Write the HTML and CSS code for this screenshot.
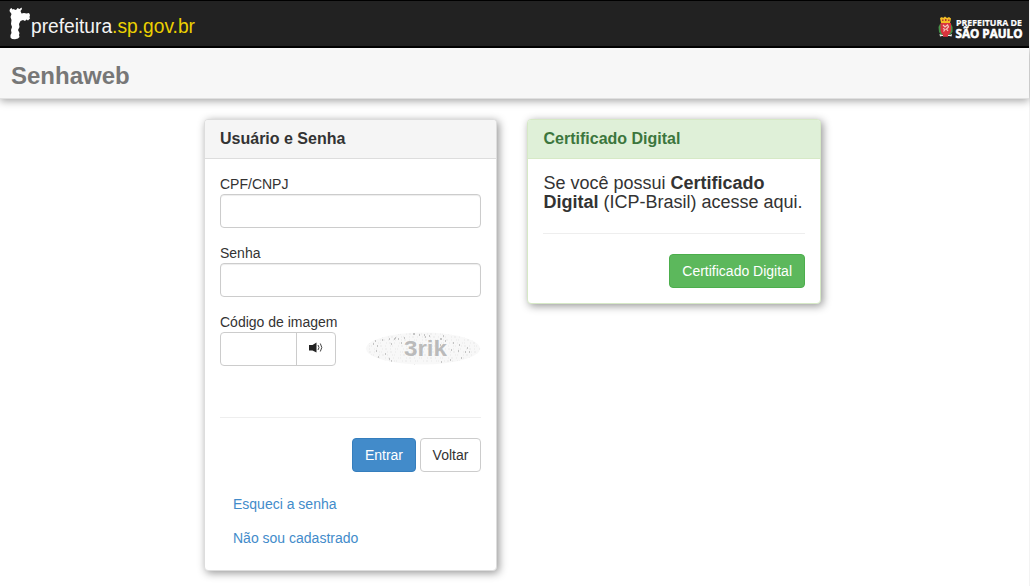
FILE: index.html
```html
<!DOCTYPE html>
<html lang="pt-BR">
<head>
<meta charset="utf-8">
<title>Senhaweb</title>
<link rel="stylesheet" href="styles.css">
</head>
<body>
<div class="page">
  <header class="topbar">
    <a class="brand">
      <svg class="brand-mark" width="22" height="34" viewBox="0 0 22 34"><path fill="#fff" d="M1 2 2.500 1 3.500 2.500 5 2 6 3 7.500 2.500 8.500 1 10.500 2 12.500 .5 13 2 11.500 4 12.500 6.500 15 6 17.500 6.500 20 6 21 8 20.500 10 21 11.500 19 13.500 17.500 12.500 16 14 14 13 11.500 14 10 17 10.500 20 9 23 10.500 26 10 28 10.500 30 9 31.500 6 32.300 3 32 1.500 30.500 1.500 28 2.500 26 2 23 3 20 2 17 2.500 13 1.500 10 2.500 7 .5 4Z"/></svg>
      <svg class="brand-name" width="170" height="28" viewBox="0 0 170 28"><text x="0" y="20" textLength="164" lengthAdjust="spacingAndGlyphs"><tspan fill="#f4f4f4">prefeitura</tspan><tspan fill="#ecd000">.sp.gov.br</tspan></text></svg>
    </a>
    <svg class="city" width="88" height="28" viewBox="0 0 88 28">
      <path fill="#f3bd25" d="M2 2 4 1 5 2 7 .5 9 2 11 1 13 2.500 12 7H3Z"/>
      <path fill="#b4372e" d="M4 3.500h1.500v1.500H4zM7 3h1.500v2H7zM10 3.500h1.500v1.500H10z"/>
      <path fill="#47934a" d="M2 8 .5 11 1 16 3 19 12 19 14.500 16 14.500 11 13 8Z"/>
      <path fill="#d9343d" d="M2.500 7h10.500v7q-.5 5-5.200 6Q3 19 2.500 14Z"/>
      <path fill="none" stroke="#f3c9bd" stroke-width="1.200" d="m5 9 2 2 2.500-2 1 2-2 2 1.500 2M5 12.500l2 1-1.500 2"/>
      <path fill="#eee" d="m1.500 18 2 1M12 19l2-1-.5 2.500-2-.5H4l-2 .5-.5-2.500 2.500 1Z"/>
      <path fill="#d9343d" d="M5 19h5v1.800H5z"/>
      <text class="city-small" x="18" y="9.500" textLength="66" lengthAdjust="spacingAndGlyphs">PREFEITURA DE</text>
      <text class="city-big" x="17.500" y="21.500" textLength="67" lengthAdjust="spacingAndGlyphs">SÃO PAULO</text>
    </svg>
  </header>
  <div class="titlebar"><h1>Senhaweb</h1></div>
  <main class="columns">
    <section class="panel login">
      <h2 class="panel-heading">Usuário e Senha</h2>
      <form class="panel-body">
        <label class="label">CPF/CNPJ</label>
        <input class="input" type="text">
        <label class="label">Senha</label>
        <input class="input" type="password">
        <label class="label">Código de imagem</label>
        <div class="captcha">
          <div class="code">
            <input class="code-input" type="text">
            <button class="sound" type="button" aria-label="Ouvir">
              <svg width="14" height="12" viewBox="0 0 14 12"><path fill="#222" d="M0 3h3.500L7.500 .5v10L3.500 8.500H0Z"/><path fill="none" stroke="#444" d="M9 3q2 2.500 0 5M11.300 1.500q3 4 0 8"/></svg>
            </button>
          </div>
          <svg class="captcha-image" width="118" height="36" viewBox="0 0 118 36">
            <defs>
              <clipPath id="oval"><ellipse cx="59" cy="17.500" rx="57" ry="16"/></clipPath>
            </defs>
            <ellipse cx="59" cy="17.500" rx="57" ry="16" fill="#f8f8f8"/>
            <g clip-path="url(#oval)" fill="none">
              <path stroke="#e8e8e8" stroke-dasharray="1 2 2 3 1 4 1 1 1 5" d="M0 3h118M3 6h118M-5 9h123M1 12h118M-8 15h126M-3 18h121M2 21h118M-6 24h124M0 27h118M-4 30h122"/>
              <path stroke="#b5b5b5" stroke-width="1.400" d="M11 10h1m-3 3h1m3 2h1m4-6h1m6-1h1m5-1h1m-20 13h1m8 3h1m5-10h1m-3 15h1m8-20h1m2 4h1m11-9h2m4 1h1m4 0h1m0 2h1m3-1h1m10 3h2m3 2h1m-6 4h1m12-2h1m5 2h1m-9 5h1m6 1h1m8-3h1m-3 4h1m3 0h1m-9 6h1m-12 2h1m-10 2h1m-20 4h1m-1 2h2m10-2h1m-21-1h1m-10 0h1m-10-1h1m-6-3h1m-3 2h1m-12-6h1m15-18h1m48-3h1m-40 2h1"/>
            </g>
            <text class="captcha-text" x="40" y="25" textLength="43" lengthAdjust="spacingAndGlyphs">3rik</text>
          </svg>
        </div>
        <hr class="rule">
        <div class="actions">
          <button class="btn btn-primary" type="button">Entrar</button>
          <button class="btn btn-default" type="button">Voltar</button>
        </div>
        <nav class="links">
          <a>Esqueci a senha</a>
          <a>Não sou cadastrado</a>
        </nav>
      </form>
    </section>
    <section class="panel certificate">
      <h2 class="panel-heading">Certificado Digital</h2>
      <div class="panel-body">
        <p class="message">Se você possui <b>Certificado Digital</b> (ICP-Brasil) acesse aqui.</p>
        <hr class="rule">
        <div class="actions"><button class="btn btn-success" type="button">Certificado Digital</button></div>
      </div>
    </section>
  </main>
</div>
</body>
</html>
```
FILE: styles.css
```css
* { box-sizing: border-box; }
body { margin: 0; background: #fff; color: #333; font: 14px/20px "Liberation Sans", Arial, sans-serif; overflow: hidden; }
.page { width: 1030px; height: 586px; border-right: 1px solid #f3f3f3; }
.topbar { display: flex; justify-content: space-between; align-items: flex-start; height: 48px; padding: 6px 3px 0 9px; background: #222; border-top: 1px solid #000; border-bottom: 2px solid #000; }
.brand { display: flex; }
.brand-name { margin-top: 6px; font-size: 19.5px; }
.city { margin-top: 9px; }
.city text { fill: #fff; font-family: "Open Sans", sans-serif; font-weight: 700; }
.city-small { font-size: 8.5px; stroke: #fff; stroke-width: .2px; }
.city-big { font-size: 12.5px; stroke: #fff; stroke-width: .6px; }
.titlebar { height: 51px; padding: 14px 11px 0; background: #f7f7f7; border-bottom: 1px solid #e0e0e0; box-shadow: 0 2px 8px rgba(0, 0, 0, .36); }
.titlebar h1 { margin: 0; color: #777; font-size: 24px; line-height: 28px; }
.columns { display: flex; align-items: flex-start; gap: 30px; padding: 20px 0 0 204px; }
.panel { width: 293px; border: 1px solid #ddd; border-radius: 4px; background: #fff; box-shadow: 2px 2px 9px rgba(0, 0, 0, .42); }
.login { height: 452px; }
.certificate { width: 294px; height: 185px; border-color: #d6e9c6; }
.panel-heading { height: 39px; margin: 0; padding: 9px 15px; border-bottom: 1px solid #ddd; border-radius: 3px 3px 0 0; background: #f5f5f5; color: #333; font-size: 16px; line-height: 20px; }
.certificate .panel-heading { padding-left: 15.5px; border-color: #d6e9c6; background: #dff0d8; color: #3c763d; }
.panel-body { padding: 15px; }
.label { display: block; height: 20px; }
.input { display: block; width: 261px; height: 34px; margin: 0 0 15px; border: 1px solid #ccc; border-radius: 4px; background: #fff; box-shadow: inset 0 1px 1px rgba(0, 0, 0, .075); }
.captcha { display: flex; justify-content: space-between; }
.code { display: flex; width: 116px; height: 34px; border: 1px solid #ccc; border-radius: 4px; }
.code-input { width: 76px; padding: 0; border: 0; border-right: 1px solid #ccc; background: none; }
.sound { display: flex; flex: 1; align-items: center; justify-content: center; padding: 0 0 2px; border: 0; background: none; }
.captcha-image { margin: -1px -1px -1px 0; }
.captcha-text { fill: #aaa; fill-opacity: .8; font-size: 22px; font-weight: bold; }
.rule { height: 1px; margin: 51px 0 20px; border: 0; background: #eee; }
.actions { display: flex; justify-content: flex-end; gap: 4px; }
.btn { height: 34px; padding: 0 12px; border: 1px solid #ccc; border-radius: 4px; background: #fff; color: #333; font: inherit; }
.btn-default { width: 61px; padding: 0; }
.btn-primary { border-color: #357ebd; background: #428bca; color: #fff; }
.btn-success { border-color: #4cae4c; background: #5cb85c; color: #fff; }
.links { display: flex; flex-direction: column; gap: 14px; padding: 22px 0 0 13px; }
.links a { color: #428bca; }
.message { margin: 0; padding-left: .5px; font-size: 18px; line-height: 19px; }
.certificate .rule { margin-top: 21px; }
```
